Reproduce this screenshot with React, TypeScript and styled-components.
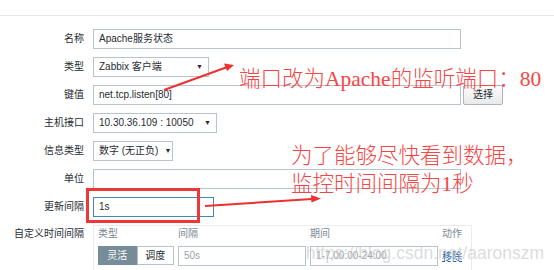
import styled, { createGlobalStyle } from "styled-components";

const GlobalStyle = createGlobalStyle`
    body {
        margin: 0;
        background: #ffffff;
        font-family: "Liberation Sans", Arial, "Noto Sans CJK SC", sans-serif;
        color: #1f2c33;
    }
`;

const Page = styled.div`
    position: relative;
    width: 554px;
    height: 270px;
    overflow: hidden;
    background: #ffffff;
`;

const TopStrip = styled.div`
    height: 15px;
    border-bottom: 1px solid #e6e9eb;
`;

const Form = styled.div`
    display: flex;
    flex-direction: column;
    gap: 8px;
    padding-top: 13px;
`;

const Row = styled.div`
    display: grid;
    grid-template-columns: 84px auto;
    column-gap: 9px;
    align-items: center;
    min-height: 20px;
`;

const TopRow = styled(Row)`
    align-items: start;
`;

const Label = styled.div<{ $pad?: number }>`
    text-align: right;
    font-size: 10px;
    line-height: 14px;
    color: #1f2c33;
    padding-top: ${(p) => p.$pad ?? 0}px;
`;

const Field = styled.div`
    display: flex;
    align-items: center;
    gap: 2px;
`;

const TextInput = styled.div<{ $width: number; $focus?: boolean; $muted?: boolean }>`
    box-sizing: border-box;
    width: ${(p) => p.$width}px;
    height: 20px;
    border: 1px solid ${(p) => (p.$focus ? "#3d87c0" : "#b8c4cb")};
    background: #ffffff;
    font-size: 10px;
    line-height: 18px;
    padding: 0 5px;
    color: ${(p) => (p.$muted ? "#9aa3a8" : "#1f2c33")};
    white-space: nowrap;
    overflow: hidden;
`;

const SelectBox = styled.div<{ $width: number }>`
    box-sizing: border-box;
    width: ${(p) => p.$width}px;
    height: 20px;
    border: 1px solid #b8c4cb;
    background: #ffffff;
    font-size: 10px;
    line-height: 18px;
    padding: 0 5px 0 5px;
    display: flex;
    justify-content: space-between;
    align-items: center;
    white-space: nowrap;
`;

const Caret = styled.span`
    font-size: 7px;
    color: #1f2c33;
    margin-left: 6px;
`;

const PickButton = styled.div`
    box-sizing: border-box;
    height: 20px;
    width: 40px;
    margin-top: -1px;
    border: 1px solid #adb3b8;
    border-radius: 2px;
    background: linear-gradient(#fbfbfb, #e9e9e9);
    font-size: 10px;
    line-height: 18px;
    text-align: center;
    color: #1f2c33;
`;

const IntervalTable = styled.div`
    box-sizing: border-box;
    width: 379px;
    height: 60px;
    border: 1px solid #e9ecee;
    padding: 1px 0 0 4px;
    display: grid;
    grid-template-columns: 76px 128px 128px auto;
    column-gap: 4px;
    row-gap: 5px;
    grid-template-rows: 14px 19px;
    align-items: center;
`;

const HeadCell = styled.div`
    font-size: 10px;
    line-height: 14px;
    color: #7c8a93;
`;

const Toggle = styled.div`
    display: flex;
    height: 19px;
`;

const ToggleButton = styled.div<{ $active?: boolean }>`
    box-sizing: border-box;
    width: ${(p) => (p.$active ? 39 : 38)}px;
    height: 19px;
    font-size: 10px;
    line-height: 17px;
    text-align: center;
    border: 1px solid ${(p) => (p.$active ? "#768d99" : "#b8c4cb")};
    background: ${(p) => (p.$active ? "#768d99" : "#ffffff")};
    color: ${(p) => (p.$active ? "#ffffff" : "#1f2c33")};
`;

const RemoveLink = styled.span`
    font-size: 10px;
    color: #1f65a6;
    text-decoration: underline;
    text-decoration-style: dashed;
`;

const Note = styled.div<{ $left: number; $top: number }>`
    position: absolute;
    left: ${(p) => p.$left}px;
    top: ${(p) => p.$top}px;
    font-family: "Liberation Serif", "Noto Sans CJK SC", serif;
    font-size: 21.5px;
    font-weight: 300;
    line-height: 28px;
    color: #f74545;
    white-space: nowrap;
`;

const Overlay = styled.svg`
    position: absolute;
    left: 0;
    top: 0;
`;

const Watermark = styled.div`
    position: absolute;
    right: 10px;
    top: 243px;
    font-family: "Liberation Sans", Arial, sans-serif;
    font-size: 17.5px;
    color: rgba(190, 190, 190, 0.55);
    white-space: nowrap;
`;

const App = () => {
    return (
        <Page>
            <GlobalStyle />
            <TopStrip />
            <Form>
                <Row>
                    <Label>名称</Label>
                    <TextInput $width={368}>Apache服务状态</TextInput>
                </Row>
                <Row>
                    <Label>类型</Label>
                    <SelectBox $width={116}>
                        Zabbix 客户端<Caret>▼</Caret>
                    </SelectBox>
                </Row>
                <Row>
                    <Label>键值</Label>
                    <Field>
                        <TextInput $width={368}>net.tcp.listen[80]</TextInput>
                        <PickButton>选择</PickButton>
                    </Field>
                </Row>
                <Row>
                    <Label>主机接口</Label>
                    <SelectBox $width={124}>
                        10.30.36.109 : 10050<Caret>▼</Caret>
                    </SelectBox>
                </Row>
                <Row>
                    <Label>信息类型</Label>
                    <SelectBox $width={80}>
                        数字 (无正负)<Caret>▼</Caret>
                    </SelectBox>
                </Row>
                <Row>
                    <Label>单位</Label>
                    <TextInput $width={368} />
                </Row>
                <Row>
                    <Label>更新间隔</Label>
                    <TextInput $width={121} $focus>
                        1s
                    </TextInput>
                </Row>
                <TopRow>
                    <Label $pad={2}>自定义时间间隔</Label>
                    <IntervalTable>
                        <HeadCell>类型</HeadCell>
                        <HeadCell>间隔</HeadCell>
                        <HeadCell>期间</HeadCell>
                        <HeadCell>动作</HeadCell>
                        <Toggle>
                            <ToggleButton $active>灵活</ToggleButton>
                            <ToggleButton>调度</ToggleButton>
                        </Toggle>
                        <TextInput $width={128} $muted>
                            50s
                        </TextInput>
                        <TextInput $width={128} $muted>
                            1-7,00:00-24:00
                        </TextInput>
                        <RemoveLink>移除</RemoveLink>
                    </IntervalTable>
                </TopRow>
            </Form>

            <Watermark>https://blog.csdn.net/aaronszm</Watermark>

            <Overlay width="554" height="270" viewBox="0 0 554 270">
                <rect x="87.5" y="189.5" width="111" height="32" fill="none" stroke="#ee3838" strokeWidth="3" />
                <line x1="164" y1="90" x2="226" y2="67.5" stroke="#ee3030" strokeWidth="2" />
                <polygon points="234,65 224,63.5 227,71" fill="#ee3030" />
                <line x1="205" y1="206" x2="312" y2="199" stroke="#ee3030" strokeWidth="2" />
                <polygon points="321,198.5 311,195 311.5,202.5" fill="#ee3030" />
            </Overlay>

            <Note $left={239} $top={65}>端口改为Apache的监听端口：80</Note>
            <Note $left={291} $top={142}>
                为了能够尽快看到数据，
                <br />
                监控时间间隔为1秒
            </Note>
        </Page>
    );
};

export default App;
